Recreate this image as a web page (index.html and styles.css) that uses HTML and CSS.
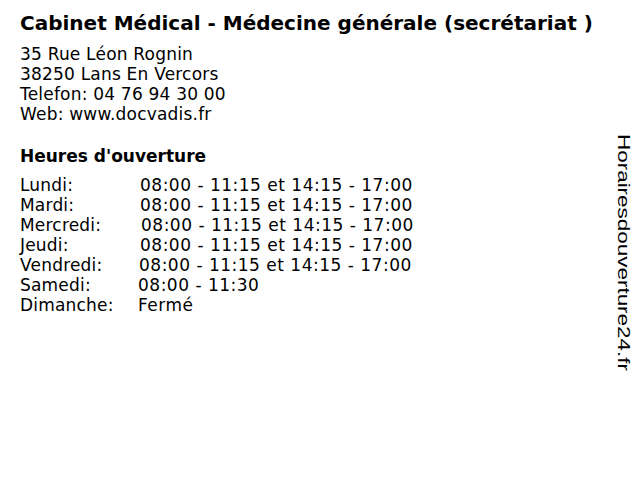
FILE: index.html
```html
<!DOCTYPE html>
<html lang="fr">
<head>
<meta charset="utf-8">
<link rel="stylesheet" href="styles.css">
</head>
<body>
<div class="page">
  <h1 class="title">Cabinet Médical - Médecine générale (secrétariat )</h1>
  <div class="address">
    <div>35 Rue Léon Rognin</div>
    <div>38250 Lans En Vercors</div>
    <div>Telefon: 04 76 94 30 00</div>
    <div>Web: www.docvadis.fr</div>
  </div>
  <h2 class="heading">Heures d'ouverture</h2>
  <div class="hours">
    <div class="day">Lundi:</div><div class="time">08:00 - 11:15 et 14:15 - 17:00</div>
    <div class="day">Mardi:</div><div class="time">08:00 - 11:15 et 14:15 - 17:00</div>
    <div class="day">Mercredi:</div><div class="time shift-r">08:00 - 11:15 et 14:15 - 17:00</div>
    <div class="day">Jeudi:</div><div class="time">08:00 - 11:15 et 14:15 - 17:00</div>
    <div class="day">Vendredi:</div><div class="time shift-l">08:00 - 11:15 et 14:15 - 17:00</div>
    <div class="day">Samedi:</div><div class="time shift-l2">08:00 - 11:30</div>
    <div class="day">Dimanche:</div><div class="time shift-l2">Fermé</div>
  </div>
</div>
<div class="brand">Horairesdouverture24.fr</div>
</body>
</html>
```
FILE: styles.css
```css
html, body {
  margin: 0;
  padding: 0;
  background: #ffffff;
}
body {
  width: 640px;
  height: 480px;
  position: relative;
  overflow: hidden;
  font-family: "DejaVu Sans", Verdana, sans-serif;
  color: #000000;
}
.page {
  padding: 11px 20px 0 20px;
}
.title {
  margin: 0;
  font-size: 20px;
  line-height: 24px;
  font-weight: bold;
  white-space: nowrap;
}
.address {
  margin-top: 9px;
  font-size: 17px;
  line-height: 20px;
  letter-spacing: 0.2px;
}
.heading {
  margin: 22px 0 0 0;
  font-size: 17px;
  line-height: 20px;
  font-weight: bold;
}
.hours {
  margin-top: 9px;
  display: grid;
  grid-template-columns: 120px auto;
  font-size: 17px;
  line-height: 20px;
}
.day {
  letter-spacing: 0.2px;
}
.time {
  white-space: nowrap;
  letter-spacing: 0.5px;
}
.shift-r { padding-left: 1px; }
.shift-l { margin-left: -1px; }
.shift-l2 { margin-left: -2px; }
.brand {
  position: absolute;
  top: 134px;
  left: 613px;
  writing-mode: vertical-rl;
  font-family: "Liberation Sans", Arial, sans-serif;
  font-size: 17px;
  line-height: 20px;
  color: #000000;
  transform: scaleY(1.32);
  transform-origin: top left;
}
```
